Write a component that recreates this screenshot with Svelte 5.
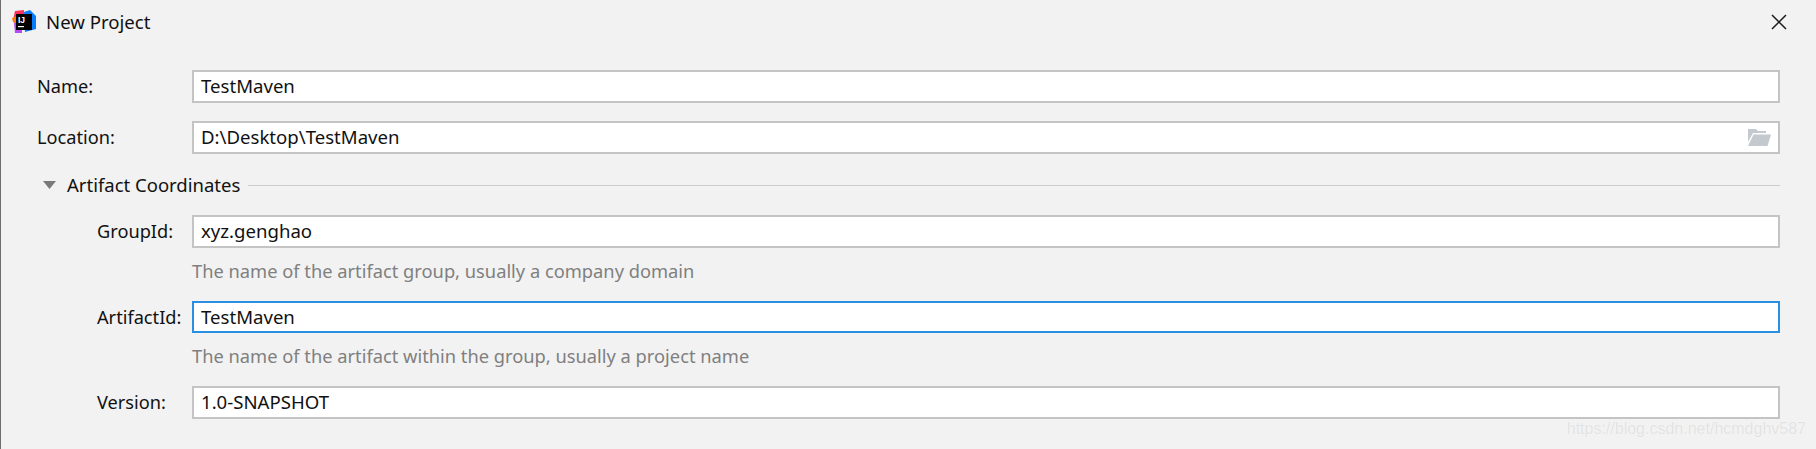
<script>
  const top = [
    { label: 'Name:', value: 'TestMaven' },
    { label: 'Location:', value: 'D:\\Desktop\\TestMaven', browse: true }
  ];
  const coords = [
    { label: 'GroupId:', value: 'xyz.genghao', hint: 'The name of the artifact group, usually a company domain' },
    { label: 'ArtifactId:', value: 'TestMaven', hint: 'The name of the artifact within the group, usually a project name', focus: true },
    { label: 'Version:', value: '1.0-SNAPSHOT' }
  ];
</script>

<div class="dialog">
  <header class="title">
    <svg class="logo" width="24" height="24" viewBox="0 0 24 24">
      <path d="M3 1 L12 0 L12 10 L1 10 Z" fill="#fe315d"/>
      <path d="M0 8 L5 6 L6 15 L1 12 Z" fill="#f97a12"/>
      <path d="M2 13 L10 12 L10 23 L3 23 Z" fill="#b74af7"/>
      <path d="M12 2 L18 0 L24 6 L24 19 L13 22 Z" fill="#087cfa"/>
      <rect x="4" y="4" width="16" height="16" fill="#000"/>
      <text class="ij" x="6" y="12.5">IJ</text>
      <rect x="6" y="16" width="6" height="1.2" fill="#fff"/>
    </svg>
    <span class="title-text">New Project</span>
    <svg class="close" width="16" height="16" viewBox="0 0 16 16">
      <path d="M1 1 L15 15 M15 1 L1 15" stroke="#1a1a1a" stroke-width="1.5" fill="none"/>
    </svg>
  </header>

  <div class="form">
    {#each top as f}
      <div class="row outer">
        <span class="label">{f.label}</span>
        <div class="field">
          <span class="val">{f.value}</span>
          {#if f.browse}
            <svg class="folder" width="23" height="17" viewBox="0 0 23 17">
              <path d="M0 0 H8 L10 2 H18 V4 H5 L0 13 Z" fill="#c3c9ce"/>
              <path d="M5.5 5.5 H23 L19.5 17 H0 Z" fill="#c3c9ce"/>
            </svg>
          {/if}
        </div>
      </div>
    {/each}

    <div class="section">
      <svg class="tri" width="13" height="8" viewBox="0 0 13 8"><path d="M0 0 H13 L6.5 8 Z" fill="#7a7a7a"/></svg>
      <span class="section-title">Artifact Coordinates</span>
      <span class="line"></span>
    </div>

    {#each coords as f}
      <div class="row inner">
        <span class="label">{f.label}</span>
        <div class="field" class:focus={f.focus}>
          <span class="val">{f.value}</span>
        </div>
      </div>
      {#if f.hint}
        <div class="hint">{f.hint}</div>
      {/if}
    {/each}
  </div>
  <span class="mark">https://blog.csdn.net/hcmdghv587</span>
</div>

<style>
  :global(body) { margin: 0; background: #f2f2f2; }
  .dialog {
    position: relative;
    box-sizing: border-box;
    width: 1816px;
    height: 449px;
    background: #f2f2f2;
    border-left: 1px solid #6e6e6e;
    font-family: "Noto Sans", "Open Sans", sans-serif;
    font-size: 18px;
    color: #111;
    overflow: hidden;
  }
  .title {
    display: flex;
    align-items: center;
    height: 44px;
    padding: 0 29px 0 11px;
  }
  .logo { flex: none; }
  .ij { font: bold 8.5px "Liberation Sans", sans-serif; fill: #fff; }
  .title-text { margin-left: 10px; flex: 1; font-size: 18.6px; padding-bottom: 1px; }
  .form {
    padding: 26px 36px 0 36px;
    display: flex;
    flex-direction: column;
  }
  .row { display: flex; align-items: center; }
  .row.outer { margin-bottom: 18px; }
  .row.outer .label { width: 155px; }
  .row.inner .label { width: 95px; margin-left: 60px; }
  .label { flex: none; white-space: nowrap; font-size: 18.2px; padding-bottom: 1px; }
  .field {
    flex: 1;
    box-sizing: border-box;
    height: 33px;
    display: flex;
    align-items: center;
    justify-content: space-between;
    background: #fff;
    border: 2px solid #c4c4c4;
    padding: 0 7px 0 7px;
  }
  .field.focus { border-color: #2a8fe0; height: 32px; }
  .val { white-space: nowrap; font-size: 18.6px; padding-bottom: 2px; }
  .section {
    display: flex;
    align-items: center;
    height: 26px;
    margin: 0 0 17px;
  }
  .tri { margin-left: 6px; }
  .section-title { margin-left: 11px; font-size: 18.5px; padding-bottom: 2px; }
  .line { flex: 1; height: 1px; background: #cccccc; margin-left: 8px; }
  .hint {
    margin-left: 155px;
    color: #808080;
    font-size: 18.3px;
    line-height: 24px;
    padding-top: 11px;
    margin-bottom: 18px;
    height: 24px;
  }
  .mark {
    position: absolute;
    right: 10px;
    top: 420px;
    font: 16px "Liberation Sans", sans-serif;
    color: #e2e2e2;
    text-shadow: 0 0 1px #fff;
  }
</style>
